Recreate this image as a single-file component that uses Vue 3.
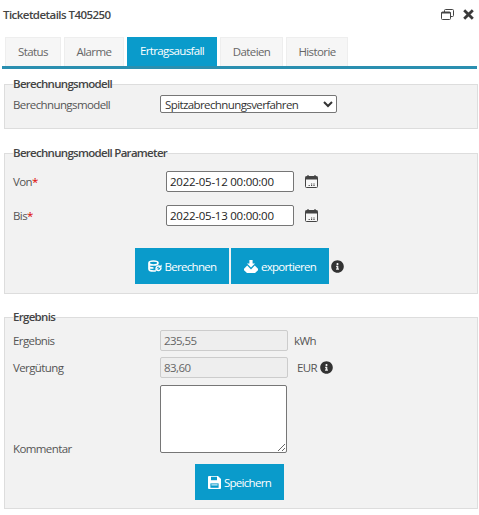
<template>
  <div class="dialog">
    <div class="titlebar">
      <span class="title">Ticketdetails T405250</span>
      <div class="window-icons">
        <svg class="restore" width="13" height="11" viewBox="0 0 13 11">
          <rect x="3.5" y="0.5" width="9" height="7" rx="1" fill="none" stroke="#444" />
          <rect x="0.5" y="3" width="9" height="7.5" rx="1" fill="#fff" stroke="#444" />
          <rect x="0.5" y="3" width="9" height="1.5" fill="#444" />
        </svg>
        <svg width="11" height="11" viewBox="0 0 11 11">
          <path d="M1.2 1.2l8.6 8.6M9.8 1.2l-8.6 8.6" stroke="#3a3a3a" stroke-width="2.8" />
        </svg>
      </div>
    </div>

    <ul class="tabs">
      <li v-for="tab in tabs" :key="tab" :class="{ active: tab === activeTab }">{{ tab }}</li>
    </ul>

    <fieldset class="model">
      <legend>Berechnungsmodell</legend>
      <div class="row">
        <label>Berechnungsmodell</label>
        <select v-model="model">
          <option>Spitzabrechnungsverfahren</option>
        </select>
      </div>
    </fieldset>

    <fieldset class="params">
      <legend>Berechnungsmodell Parameter</legend>
      <div class="row date-row" v-for="d in dates" :key="d.label">
        <label>{{ d.label }}<span class="req">*</span></label>
        <input type="text" :value="d.value">
        <svg class="cal" width="13" height="13" viewBox="0 0 13 13">
          <rect x="0.5" y="1.5" width="12" height="11" rx="1" fill="#f7f7f7" stroke="#444" />
          <rect x="0.5" y="1.5" width="12" height="3" fill="#444" />
          <path d="M3 0v3M10 0v3" stroke="#444" stroke-width="1.2" />
          <path d="M6 9h1.2M8.4 9h1.2M3.6 10.5h1.2M6 10.5h1.2M8.4 10.5h1.2" stroke="#444" stroke-width="1" />
        </svg>
      </div>
      <div class="actions">
        <button type="button" class="btn calc">
          <svg width="14" height="12" viewBox="0 0 14 12">
            <path d="M1 3C1 1.7 3.5 1 5.5 1S10 1.7 10 3 7.5 5 5.5 5 1 4.3 1 3zM1 3v6c0 1.300 2.500 2 4.500 2 .8 0 1.600-.1 2.200-.3M1 6c0 1.300 2.500 2 4.500 2" fill="none" stroke="#fff" stroke-width="1.700" />
            <path d="M8 8.500a2.600 2.600 0 0 1 4.400-1.800M13 8a2.600 2.600 0 0 1-4.400 1.800" fill="none" stroke="#fff" stroke-width="1.500" />
            <path d="M13.600 4.400v3.400h-3.400zM7.400 11.600V8.200h3.400z" fill="#fff" />
          </svg>
          Berechnen
        </button>
        <button type="button" class="btn export">
          <svg width="14" height="13" viewBox="0 0 14 13">
            <path d="M5.400 0h3.200v3.500h2.400L7 7.500l-4-4h2.400z" fill="#fff" />
            <path d="M3.200 5.600L0 8.800v1.400L3 13h8l3-2.800V8.800l-3.200-3.200-1 1L7 9.400 4.200 6.600z" fill="#fff" />
          </svg>
          exportieren
        </button>
        <svg class="info" width="13" height="13" viewBox="0 0 512 512"><path :d="infoPath" /></svg>
      </div>
    </fieldset>

    <fieldset class="result">
      <legend>Ergebnis</legend>
      <div class="row out-row">
        <label>Ergebnis</label>
        <input type="text" class="readonly" value="235,55" readonly>
        <span class="unit kwh">kWh</span>
      </div>
      <div class="row out-row">
        <label>Vergütung</label>
        <input type="text" class="readonly" value="83,60" readonly>
        <span class="unit eur">EUR</span>
        <svg class="info" width="13" height="13" viewBox="0 0 512 512"><path :d="infoPath" /></svg>
      </div>
      <div class="row comment-row">
        <label>Kommentar</label>
        <textarea></textarea>
      </div>
      <div class="save-row">
        <button type="button" class="btn save">
          <svg width="13" height="13" viewBox="0 0 13 13">
            <path d="M1 0h9l3 3v9a1 1 0 0 1-1 1H1a1 1 0 0 1-1-1V1a1 1 0 0 1 1-1z" fill="#fff" />
            <rect x="3" y="0.800" width="6" height="3.400" fill="#0a9bcb" />
            <rect x="2.400" y="7.400" width="8.200" height="4.400" fill="#0a9bcb" />
            <rect x="3.400" y="8.400" width="6.200" height="1" fill="#fff" />
          </svg>
          Speichern
        </button>
      </div>
    </fieldset>
  </div>
</template>

<script setup>
import { ref } from 'vue';

const tabs = ['Status', 'Alarme', 'Ertragsausfall', 'Dateien', 'Historie'];
const activeTab = 'Ertragsausfall';
const model = ref('Spitzabrechnungsverfahren');
const dates = [
  { label: 'Von', value: '2022-05-12 00:00:00' },
  { label: 'Bis', value: '2022-05-13 00:00:00' },
];
const infoPath = 'M256 8C119 8 8 119.1 8 256c0 137 111 248 248 248s248-111 248-248C504 119.1 393 8 256 8zm0 110c23.2 0 42 18.8 42 42s-18.8 42-42 42-42-18.8-42-42 18.8-42 42-42zm56 254c0 6.6-5.4 12-12 12h-88c-6.6 0-12-5.4-12-12v-24c0-6.6 5.4-12 12-12h12v-64h-12c-6.6 0-12-5.4-12-12v-24c0-6.6 5.4-12 12-12h64c6.6 0 12 5.4 12 12v100h12c6.6 0 12 5.4 12 12v24z';
</script>

<style>
body {
  background: #fff;
}
</style>

<style scoped>
.dialog {
  width: 479px;
  height: 515px;
  box-sizing: border-box;
  overflow: hidden;
  font-family: "Open Sans", "Noto Sans", sans-serif;
  font-size: 11.5px;
  letter-spacing: -0.6px;
  color: #555;
}

.titlebar {
  display: flex;
  justify-content: space-between;
  align-items: center;
  height: 28px;
  padding: 0 5px 0 3px;
}

.title {
  font-weight: 600;
  font-size: 11.5px;
  letter-spacing: -0.55px;
  color: #444;
}

.window-icons {
  display: flex;
  align-items: center;
  gap: 9px;
}

.tabs {
  display: flex;
  list-style: none;
  margin: 9px 2px 0 2px;
  padding: 0 0 0 3px;
  height: 29px;
  border-bottom: 3px solid #2a8fb0;
}

.tabs li {
  box-sizing: border-box;
  height: 29px;
  margin-right: 3px;
  line-height: 27px;
  text-align: center;
  font-size: 11.5px;
  color: #666;
  background: #f6f6f6;
  border: 1px solid #eee;
  border-bottom: none;
}

.tabs li:nth-child(1) { width: 56px; }
.tabs li:nth-child(2) { width: 60px; }
.tabs li:nth-child(3) { width: 90px; }
.tabs li:nth-child(4) { width: 63px; }
.tabs li:nth-child(5) { width: 62px; }

.tabs li.active {
  color: #fff;
  font-weight: 500;
  letter-spacing: -0.65px;
  line-height: 25px;
  background: #0a9bcb;
  border-color: #0a9bcb;
}

fieldset {
  box-sizing: border-box;
  display: block;
  margin: 0 1px 0 4px;
  padding: 0 8px;
  background: #f2f2f2;
  border: 1px solid #ddd;
  min-width: 0;
}

legend {
  padding: 0;
  font-weight: 600;
  font-size: 11.5px;
  line-height: 14px;
  letter-spacing: -0.7px;
  color: #444;
}

.model {
  height: 52px;
  margin-top: 8px;
}

.params {
  height: 148px;
  margin-top: 17px;
}

.result {
  height: 199px;
  margin-top: 16px;
}

.row {
  display: flex;
  align-items: center;
}

label {
  font-size: 11.5px;
  color: #555;
}

.model .row {
  height: 18px;
  margin-top: 4px;
}

.model label {
  width: 147px;
}

select {
  box-sizing: border-box;
  width: 177px;
  height: 18px;
  padding: 0;
  font-family: inherit;
  font-size: 11.5px;
  letter-spacing: -0.6px;
  color: #333;
  background: #fff;
  border: 1px solid #767676;
  border-radius: 2px;
}

.date-row {
  height: 21px;
  margin-bottom: 13px;
}

.date-row:first-of-type {
  margin-top: 11px;
}

.date-row label {
  width: 153px;
}

.req {
  color: #d00;
}

input {
  box-sizing: border-box;
  width: 128px;
  height: 21px;
  padding: 0 3px;
  font-family: inherit;
  font-size: 11.5px;
  letter-spacing: -0.25px;
  color: #222;
  background: #fff;
  border: 1px solid #767676;
  border-radius: 2px;
}

.cal {
  margin-left: 11px;
}

.actions {
  display: flex;
  align-items: center;
  gap: 2px;
  margin-top: 22px;
  padding-left: 122px;
}

.btn {
  display: flex;
  justify-content: center;
  align-items: center;
  gap: 3px;
  height: 36px;
  padding: 0;
  font-family: inherit;
  font-size: 11.5px;
  font-weight: 500;
  letter-spacing: -0.7px;
  color: #fff;
  background: #0a9bcb;
  border: none;
}

.calc { width: 94px; }
.export { width: 98px; }

.info {
  fill: #333;
}

.out-row {
  height: 21px;
  margin-bottom: 6px;
}

.out-row:first-of-type {
  margin-top: 6px;
}

.out-row label,
.comment-row label {
  width: 147px;
}

.readonly {
  color: #666;
  letter-spacing: -0.55px;
  background: #eee;
  border-color: #ccc;
}

.unit {
  font-size: 11.5px;
  color: #555;
}

.kwh { margin-left: 6px; }
.eur { margin-left: 9px; margin-right: 3px; }

.comment-row {
  align-items: flex-end;
  height: 68px;
  margin-top: 7px;
}

.comment-row label {
  margin-bottom: -3px;
}

textarea {
  box-sizing: border-box;
  width: 127px;
  height: 68px;
  padding: 2px;
  background: #fff;
  border: 1px solid #767676;
  border-radius: 2px;
}

.save-row {
  display: flex;
  margin-top: 11px;
  padding-left: 182px;
}

.save { width: 89px; }
</style>
